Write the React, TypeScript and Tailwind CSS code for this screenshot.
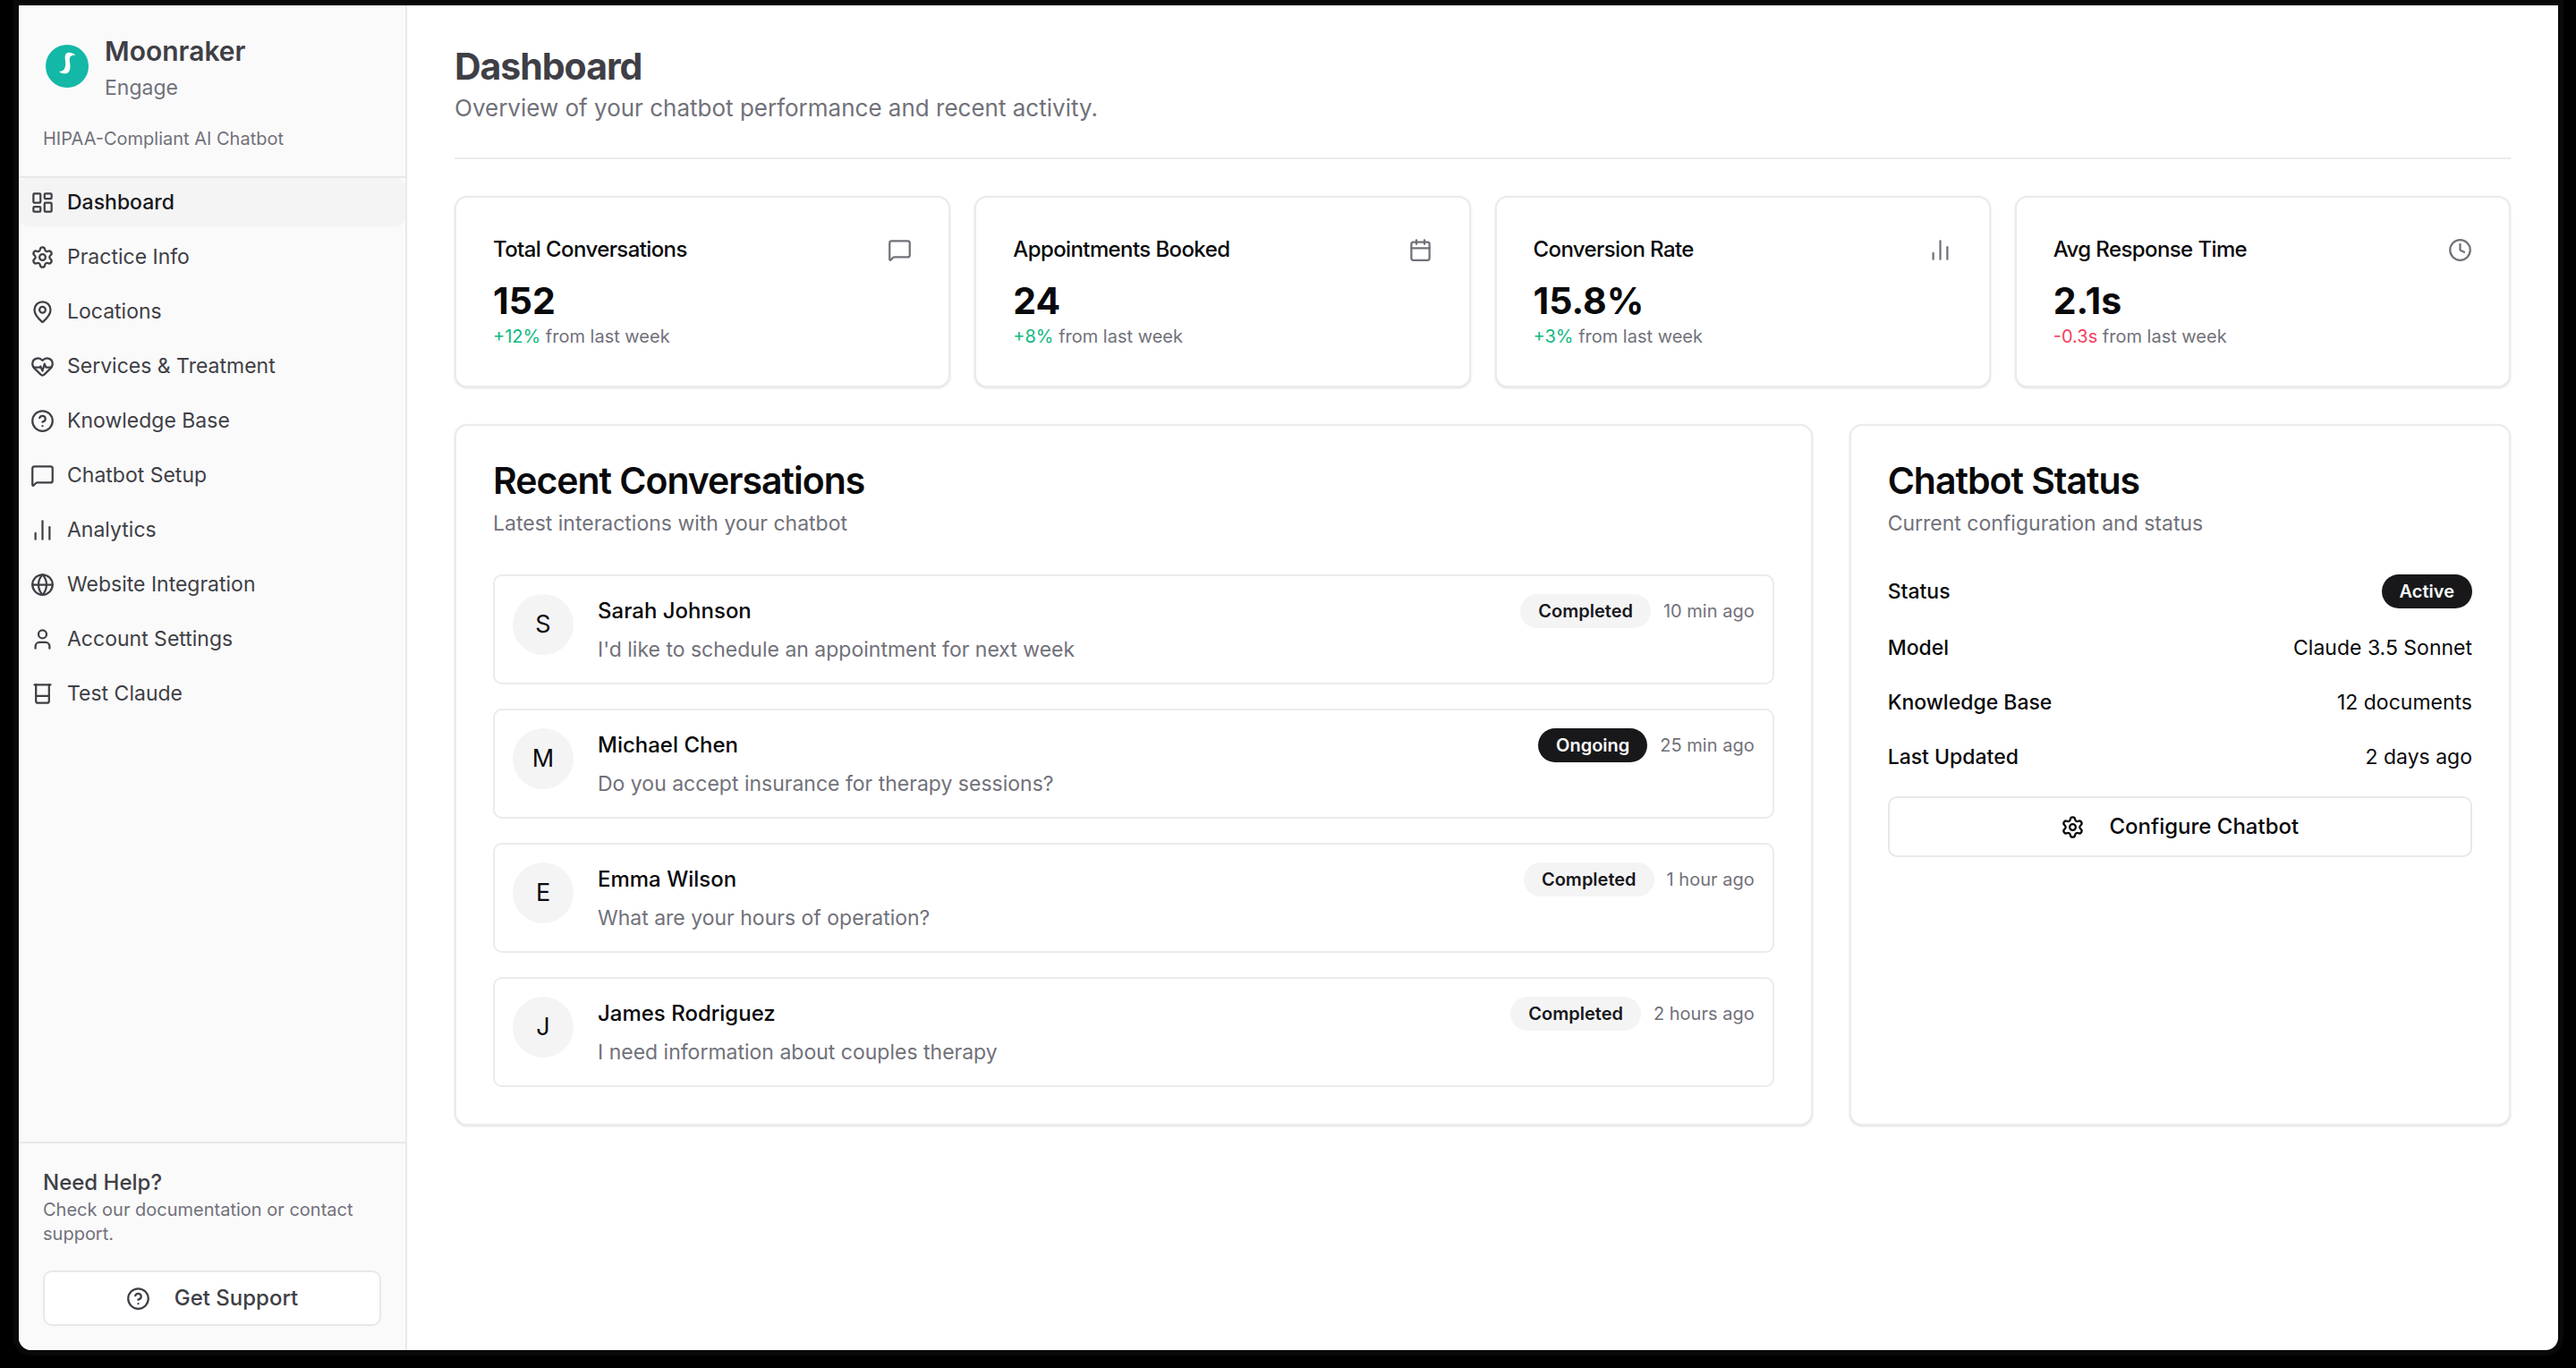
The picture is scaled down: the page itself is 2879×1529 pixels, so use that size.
import {
  Calendar,
  ChartNoAxesColumn,
  CircleHelp,
  Clock,
  Globe,
  HeartPulse,
  LayoutDashboard,
  MapPin,
  MessageSquare,
  Settings,
  User,
  type LucideIcon,
} from "lucide-react";
import type { ReactNode, SVGProps } from "react";

function Beaker(props: SVGProps<SVGSVGElement>) {
  return (
    <svg viewBox="0 0 24 24" fill="none" stroke="currentColor" strokeWidth="2" strokeLinecap="round" strokeLinejoin="round" {...props}>
      <path d="M4 3h16" />
      <path d="M5.5 3v16a2 2 0 0 0 2 2h9a2 2 0 0 0 2-2V3" />
      <path d="M5.5 14h13" />
    </svg>
  );
}

function Logo() {
  return (
    <svg viewBox="0 0 48 48" className="size-12 shrink-0" aria-hidden="true">
      <circle cx="24" cy="24" r="24" fill="#14b8a6" />
      <path
        d="M33.5 11.5c-3-2.5-7-3.200-9.500-2.300-2 .8-2.500 3-2.300 6 .2 3.500.8 5.500.3 8.500-.6 3.500-2.500 6.200-7 6.200 2.500 2.300 7.500 3.300 10 1.300 2.300-2 2.700-5 2.400-8.500-.2-3-1-5.200-.5-7.700.4-2.200 2.600-3.600 6.600-3.500z"
        fill="#fff"
      />
    </svg>
  );
}

type NavItem = { label: string; icon: LucideIcon | typeof Beaker; active?: boolean };

const nav: NavItem[] = [
  { label: "Dashboard", icon: LayoutDashboard, active: true },
  { label: "Practice Info", icon: Settings },
  { label: "Locations", icon: MapPin },
  { label: "Services & Treatment", icon: HeartPulse },
  { label: "Knowledge Base", icon: CircleHelp },
  { label: "Chatbot Setup", icon: MessageSquare },
  { label: "Analytics", icon: ChartNoAxesColumn },
  { label: "Website Integration", icon: Globe },
  { label: "Account Settings", icon: User },
  { label: "Test Claude", icon: Beaker },
];

const stats = [
  { title: "Total Conversations", value: "152", delta: "+12%", icon: MessageSquare, up: true },
  { title: "Appointments Booked", value: "24", delta: "+8%", icon: Calendar, up: true },
  { title: "Conversion Rate", value: "15.8%", delta: "+3%", icon: ChartNoAxesColumn, up: true },
  { title: "Avg Response Time", value: "2.1s", delta: "-0.3s", icon: Clock, up: false },
];

const conversations = [
  { name: "Sarah Johnson", text: "I'd like to schedule an appointment for next week", status: "Completed", time: "10 min ago" },
  { name: "Michael Chen", text: "Do you accept insurance for therapy sessions?", status: "Ongoing", time: "25 min ago" },
  { name: "Emma Wilson", text: "What are your hours of operation?", status: "Completed", time: "1 hour ago" },
  { name: "James Rodriguez", text: "I need information about couples therapy", status: "Completed", time: "2 hours ago" },
];

const details = [
  { label: "Model", value: "Claude 3.5 Sonnet" },
  { label: "Knowledge Base", value: "12 documents" },
  { label: "Last Updated", value: "2 days ago" },
];

function Badge({ children, dark }: { children: ReactNode; dark: boolean }) {
  return (
    <span
      className={
        dark
          ? "rounded-full bg-[#18181b] px-5 text-[20px] leading-[38px] font-semibold text-[#fafafa]"
          : "rounded-full bg-[#f4f4f5] px-5 text-[20px] leading-[38px] font-semibold text-[#18181b]"
      }
    >
      {children}
    </span>
  );
}

function Card({ children }: { children: ReactNode }) {
  return (
    <section className="rounded-[14px] border-2 border-[#ebebee] bg-white p-[41px] shadow-sm">{children}</section>
  );
}

export default function App() {
  return (
    <div className="min-h-screen bg-black pt-[6px] pr-[20px] pb-[20px] pl-[21px] font-[Inter,sans-serif] text-[#09090b]">
      <div className="flex min-h-[calc(100vh-26px)] overflow-hidden rounded-b-[14px] bg-white ring-[6px] ring-[#090909]">
        <aside className="flex w-[434px] shrink-0 flex-col border-r-2 border-[#e8e8ec] bg-[#fafafa] text-[#3f3f46]">
          <div className="border-b-2 border-[#e8e8ec] px-[27px] pt-[27px] pb-[25px]">
            <div className="flex items-center gap-[18px] pl-[3px]">
              <Logo />
              <div>
                <p className="text-[30px] leading-[48px] font-semibold">Moonraker</p>
                <p className="text-[23px] leading-[34px] text-[#71717a]">Engage</p>
              </div>
            </div>
            <p className="mt-[23px] text-[20px] leading-[34px] text-[#71717a]">HIPAA-Compliant AI Chatbot</p>
          </div>
          <nav className="flex flex-col gap-[7px]">
            {nav.map(({ label, icon: Icon, active }) => (
              <a
                key={label}
                href="#"
                className={
                  active
                    ? "flex items-center gap-[14px] rounded-[10px] bg-[#f4f4f5] px-[13px] text-[23px] leading-[54px] font-medium text-[#18181b]"
                    : "flex items-center gap-[14px] rounded-[10px] px-[13px] text-[23px] leading-[54px]"
                }
              >
                <Icon className="size-[27px] shrink-0 text-[#3f3f46]" />
                {label}
              </a>
            ))}
          </nav>
          <div className="mt-auto border-t-2 border-[#e8e8ec] px-[27px] pt-[27px] pb-[27px]">
            <p className="text-[24px] leading-[34px] font-medium">Need Help?</p>
            <p className="text-[20px] leading-[27px] text-[#71717a]">Check our documentation or contact support.</p>
            <button className="mt-[27px] flex h-[62px] w-full items-center justify-center gap-[27px] rounded-[10px] border-2 border-[#e8e8ea] bg-white text-[24px] font-medium">
              <CircleHelp className="size-[27px]" />
              Get Support
            </button>
          </div>
        </aside>

        <main className="min-w-0 flex-1 px-[53px] pt-[41px]">
          <header className="border-b-2 border-[#ebebee] pb-[35px]">
            <h1 className="text-[41px] leading-[54px] font-bold tracking-tight text-[#3f3f46]">Dashboard</h1>
            <p className="text-[26px] leading-[40px] text-[#71717a]">Overview of your chatbot performance and recent activity.</p>
          </header>

          <div className="mt-[41px] grid grid-cols-4 gap-[27px]">
            {stats.map(({ title, value, delta, icon: Icon, up }) => (
              <Card key={title}>
                <div className="flex items-center justify-between">
                  <h2 className="text-[24px] leading-[34px] font-medium tracking-tight">{title}</h2>
                  <Icon className="size-[27px] text-[#71717a]" />
                </div>
                <p className="mt-[13px] text-[41px] leading-[54px] font-bold">{value}</p>
                <p className="text-[20px] leading-[27px] text-[#71717a]">
                  <span className={up ? "text-[#10b981]" : "text-[#f43f5e]"}>{delta}</span> from last week
                </p>
              </Card>
            ))}
          </div>

          <div className="mt-[41px] grid grid-cols-[1519fr_740fr] gap-[41px]">
            <Card>
              <h2 className="text-[41px] leading-[41px] font-semibold tracking-tight">Recent Conversations</h2>
              <p className="mt-[10px] text-[23px] leading-[34px] text-[#71717a]">Latest interactions with your chatbot</p>
              <ul className="mt-[40px] flex flex-col gap-[27px]">
                {conversations.map(({ name, text, status, time }) => (
                  <li key={name} className="flex items-start gap-[27px] rounded-[10px] border-2 border-[#ebebee] p-5">
                    <span className="flex size-[68px] shrink-0 items-center justify-center rounded-full bg-[#f4f4f5] text-[27px]">
                      {name[0]}
                    </span>
                    <div className="min-w-0 flex-1">
                      <div className="flex items-center justify-between">
                        <h3 className="text-[24px] leading-[38px] font-medium">{name}</h3>
                        <div className="flex items-center gap-[14px]">
                          <Badge dark={status === "Ongoing"}>{status}</Badge>
                          <span className="text-[20px] text-[#71717a]">{time}</span>
                        </div>
                      </div>
                      <p className="mt-[7px] text-[23px] leading-[34px] text-[#71717a]">{text}</p>
                    </div>
                  </li>
                ))}
              </ul>
            </Card>

            <Card>
              <h2 className="text-[41px] leading-[41px] font-semibold tracking-tight">Chatbot Status</h2>
              <p className="mt-[10px] text-[23px] leading-[34px] text-[#71717a]">Current configuration and status</p>
              <dl className="mt-[40px] flex flex-col gap-[27px] text-[23px] leading-[34px]">
                <div className="flex items-center justify-between">
                  <dt className="font-medium">Status</dt>
                  <dd className="flex">
                    <Badge dark>Active</Badge>
                  </dd>
                </div>
                {details.map(({ label, value }) => (
                  <div key={label} className="flex items-center justify-between">
                    <dt className="font-medium">{label}</dt>
                    <dd>{value}</dd>
                  </div>
                ))}
              </dl>
              <button className="mt-[27px] flex h-[68px] w-full items-center justify-center gap-[27px] rounded-[10px] border-2 border-[#e8e8ea] bg-white text-[24px] font-medium">
                <Settings className="size-[27px]" />
                Configure Chatbot
              </button>
            </Card>
          </div>
        </main>
      </div>
    </div>
  );
}
